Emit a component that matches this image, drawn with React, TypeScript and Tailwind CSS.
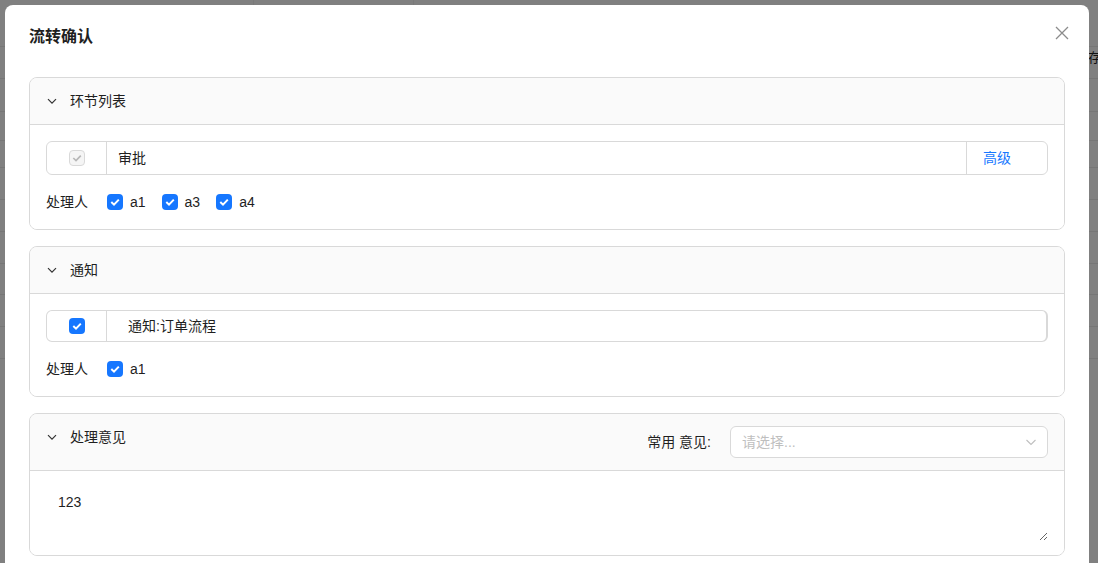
import React from 'react';

const font = { fontFamily: '"Liberation Sans", "Noto Sans CJK SC", sans-serif' };

const Chevron = () => (
  <svg width="12" height="12" viewBox="0 0 12 12" className="shrink-0">
    <path d="M2 4.2 L6 8.2 L10 4.2" fill="none" stroke="#333" strokeWidth="1.2" />
  </svg>
);

const Check = ({ disabled = false }: { disabled?: boolean }) =>
  disabled ? (
    <span className="w-4 h-4 rounded-[4px] border border-[#d9d9d9] bg-[#f5f5f5] flex items-center justify-center shrink-0">
      <svg width="12" height="12" viewBox="0 0 12 12">
        <path d="M2.3 6 L5 8.6 L9.8 3.6" fill="none" stroke="#b8b8b8" strokeWidth="1.7" />
      </svg>
    </span>
  ) : (
    <span className="w-4 h-4 rounded-[4px] bg-[#1677ff] flex items-center justify-center shrink-0">
      <svg width="12" height="12" viewBox="0 0 12 12">
        <path d="M2.3 6 L5 8.6 L9.8 3.6" fill="none" stroke="#fff" strokeWidth="2" />
      </svg>
    </span>
  );

const Handlers = ({ names }: { names: string[] }) => (
  <div className="mt-4 h-[22px] flex items-center text-[14px] text-[#1f1f1f]">
    <span className="w-[61px]">处理人</span>
    {names.map((n) => (
      <label key={n} className="flex items-center mr-2">
        <Check />
        <span className="pl-[7px] pr-2">{n}</span>
      </label>
    ))}
  </div>
);

const Panel = ({ title, right, children }: { title: string; right?: React.ReactNode; children: React.ReactNode }) => (
  <div className="border border-[#d9d9d9] rounded-lg overflow-hidden">
    <div className="bg-[#fafafa] border-b border-[#d9d9d9] px-4 flex items-start justify-between">
      <div className="h-[46px] flex items-center gap-3 text-[14px] text-[#1f1f1f]">
        <Chevron />
        <span>{title}</span>
      </div>
      {right}
    </div>
    <div className="bg-white">{children}</div>
  </div>
);

export default function App() {
  const bgRows = [42, 32, 33, 29, 27, 32, 32, 32, 31, 32, 32];
  return (
    <div className="relative w-[1098px] h-[563px] overflow-hidden bg-[#808080]" style={font}>
      {/* page behind the mask */}
      <div className="flex flex-col">
        <div className="h-[5px] flex">
          <div className="w-[254px] border-r border-[#7a7a7a]" />
          <div className="w-[160px] border-r border-[#7a7a7a]" />
        </div>
        {bgRows.map((h, i) => (
          <div key={i} className="border-b border-[#767676] flex justify-end" style={{ height: h }}>
            {i === 1 && <span className="text-[13px] text-[#111] mt-[1px] -mr-[3px]">存</span>}
          </div>
        ))}
      </div>

      <div className="absolute left-[5px] top-[5px] w-[1084px] h-[600px] bg-white rounded-lg px-6 pt-5">
        <div className="flex items-center justify-between h-6">
          <span className="text-[16px] font-bold text-[#1f1f1f]">流转确认</span>
          <svg width="14" height="14" viewBox="0 0 14 14" className="mr-[-4px] mt-[-8px]">
            <path d="M1 1 L13 13 M13 1 L1 13" stroke="#8c8c8c" strokeWidth="1.3" />
          </svg>
        </div>

        <div className="mt-7 flex flex-col gap-4">
          <Panel title="环节列表">
            <div className="px-4 pt-4 pb-4">
              <div className="h-[34px] flex border border-[#d9d9d9] rounded-md text-[14px] text-[#1f1f1f]">
                <div className="w-[60px] border-r border-[#d9d9d9] flex items-center justify-center">
                  <Check disabled />
                </div>
                <div className="flex-1 flex items-center pl-[11px]">审批</div>
                <div className="w-[81px] border-l border-[#d9d9d9] flex items-center pl-4 text-[#1677ff]">高级</div>
              </div>
              <Handlers names={['a1', 'a3', 'a4']} />
            </div>
          </Panel>

          <Panel title="通知">
            <div className="px-4 pt-4 pb-4">
              <div className="h-[32px] flex border border-[#d9d9d9] border-r-2 rounded-md text-[14px] text-[#1f1f1f]">
                <div className="w-[60px] border-r border-[#d9d9d9] flex items-center justify-center">
                  <Check />
                </div>
                <div className="flex-1 flex items-center pl-[21px]">通知:订单流程</div>
              </div>
              <Handlers names={['a1']} />
            </div>
          </Panel>

          <Panel
            title="处理意见"
            right={
              <div className="py-3 flex items-center gap-[19px] text-[14px] text-[#1f1f1f]">
                <span>常用 意见:</span>
                <div className="w-[318px] h-8 border border-[#d9d9d9] rounded-md bg-white flex items-center justify-between pl-[11px] pr-[10px]">
                  <span className="text-[#bfbfbf]">请选择...</span>
                  <svg width="12" height="12" viewBox="0 0 12 12">
                    <path d="M1.5 4 L6 8.5 L10.5 4" fill="none" stroke="#bfbfbf" strokeWidth="1.1" />
                  </svg>
                </div>
              </div>
            }
          >
            <div className="px-4 pt-4 pb-[14px]">
              <textarea
                defaultValue="123"
                className="block w-full h-[54px] px-3 py-[5px] text-[14px] text-[#1f1f1f] outline-none resize-y"
                style={font}
              />
            </div>
          </Panel>
        </div>
      </div>
    </div>
  );
}
